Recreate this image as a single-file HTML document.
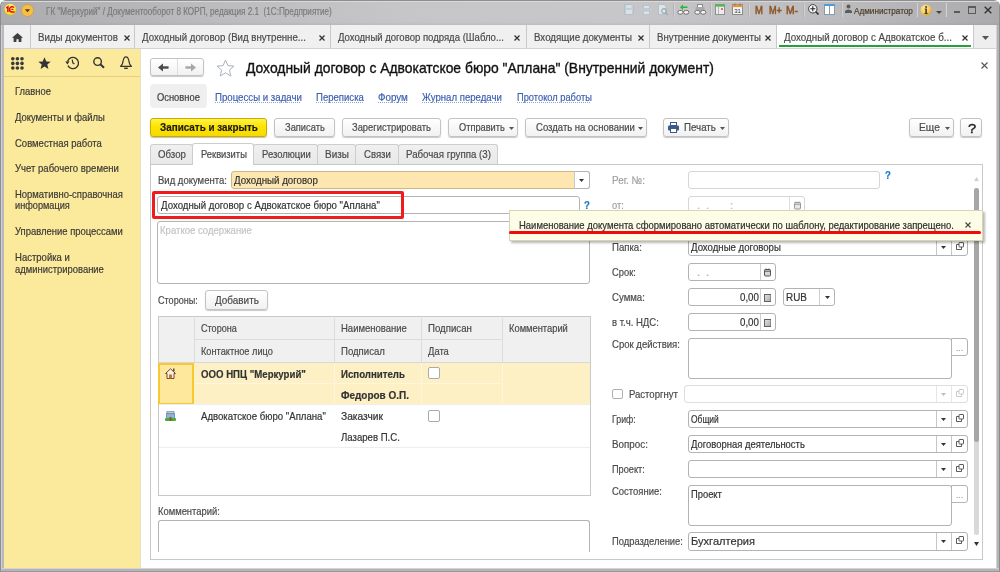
<!DOCTYPE html>
<html><head><meta charset="utf-8"><title>1C</title>
<style>
html,body{margin:0;padding:0;}
body{width:1000px;height:572px;overflow:hidden;position:relative;background:#c5c5c7;font-family:"Liberation Sans",sans-serif;}
div,svg{position:absolute;box-sizing:border-box;}
.t{white-space:pre;transform-origin:0 0;-webkit-text-stroke:0.2px currentColor;}
</style></head><body>
<div style="left:0px;top:0px;width:1000px;height:572px;background:#ffffff;"></div>
<div style="left:0px;top:0px;width:1000px;height:572px;background:#8e8e90;border-radius:6px 6px 0 0;"></div>
<div style="left:1px;top:1px;width:998px;height:570px;background:#c6c6c8;border-radius:5px 5px 0 0;"></div>
<div style="left:1px;top:1px;width:998px;height:24px;border-radius:5px 5px 0 0;background:linear-gradient(90deg,#acacae 0%,#bbbbbd 20%,#c6c6c8 40%,#c7c7c9 62%,#bcbcbe 84%,#ababad 100%);"></div>
<div style="left:1px;top:22px;width:998px;height:3px;background:linear-gradient(rgba(0,0,0,0),rgba(0,0,0,0.05));"></div>
<div style="left:1px;top:25px;width:3px;height:543px;background:linear-gradient(90deg,#d0d0d2 0 1px,#b9babe 1px);"></div>
<div style="left:2px;top:568px;width:996px;height:4px;background:linear-gradient(#d4d4d6 0 1px,#b4b4b6 1px 3px,#9a9a9c 3px);"></div>
<div style="left:2px;top:1px;width:996px;height:1px;background:#d9d9db;"></div>
<div class="t" style="left:46px;top:7px;font-size:10px;line-height:10px;font-weight:400;color:#7a7a7a;transform:scaleX(0.8148);">ГК &quot;Меркурий&quot; / Документооборот 8 КОРП, редакция 2.1  (1С:Предприятие)</div>
<svg style="left:4px;top:3px" width="13" height="13" viewBox="0 0 13 13"><defs><radialGradient id="lg" cx="0.45" cy="0.35" r="0.7"><stop offset="0" stop-color="#fffbb0"/><stop offset="0.6" stop-color="#ffe640"/><stop offset="1" stop-color="#f0c000"/></radialGradient></defs><circle cx="6.3" cy="6.5" r="5.8" fill="url(#lg)"/><path d="M2.3 5.2 L3.9 3.9 L3.9 8.9" fill="none" stroke="#e01010" stroke-width="1.6"/><path d="M9.9 4.6 C9.3 3.9 8.7 3.8 8 3.8 C6.6 3.8 5.6 5 5.6 6.4 C5.6 7.9 6.6 8.9 8 8.9 L10.6 8.9" fill="none" stroke="#e01010" stroke-width="1.5"/><path d="M7.3 6.4 L9.4 6.4" stroke="#e01010" stroke-width="1.3"/></svg>
<svg style="left:21px;top:4px" width="13" height="13" viewBox="0 0 13 13"><circle cx="6.5" cy="6.5" r="6" fill="#f4c04a" stroke="#d9962a" stroke-width="0.7"/><path d="M3.8 5.3 L9.2 5.3 L6.5 8.3 Z" fill="#5a3a10"/></svg>
<div style="left:37px;top:2px;width:1px;height:15px;background:#b0b0b2;"></div>
<div style="left:4px;top:25px;width:992px;height:23px;background:#f0f0f0;"></div>
<div style="left:4px;top:48px;width:992px;height:1px;background:#d2d2d6;"></div>
<div style="left:776px;top:25px;width:197px;height:23px;background:#ffffff;"></div>
<div style="left:973px;top:25px;width:23px;height:23px;background:#eeeeee;"></div>
<div style="left:30px;top:25px;width:1px;height:23px;background:#c9c9c9;"></div>
<div style="left:134px;top:25px;width:1px;height:23px;background:#c9c9c9;"></div>
<div style="left:330px;top:25px;width:1px;height:23px;background:#c9c9c9;"></div>
<div style="left:526px;top:25px;width:1px;height:23px;background:#c9c9c9;"></div>
<div style="left:649px;top:25px;width:1px;height:23px;background:#c9c9c9;"></div>
<div style="left:776px;top:25px;width:1px;height:23px;background:#c9c9c9;"></div>
<div style="left:973px;top:25px;width:1px;height:23px;background:#c9c9c9;"></div>
<svg style="left:12px;top:33px" width="11" height="9" viewBox="0 0 11 9"><path d="M5.5 0 L11 4.8 L9.4 4.8 L9.4 9 L6.6 9 L6.6 6.2 L4.4 6.2 L4.4 9 L1.6 9 L1.6 4.8 L0 4.8 Z" fill="#404040"/></svg>
<div class="t" style="left:38px;top:32px;font-size:11px;line-height:11px;font-weight:400;color:#4a4a4a;transform:scaleX(0.8842);">Виды документов</div>
<svg style="left:124px;top:35px" width="6" height="6" viewBox="0 0 6 6"><path d="M0.5 0.5 L5.5 5.5 M5.5 0.5 L0.5 5.5" stroke="#333" stroke-width="1.3"/></svg>
<div class="t" style="left:142px;top:32px;font-size:11px;line-height:11px;font-weight:400;color:#4a4a4a;transform:scaleX(0.8782);">Доходный договор (Вид внутренне...</div>
<svg style="left:319px;top:35px" width="6" height="6" viewBox="0 0 6 6"><path d="M0.5 0.5 L5.5 5.5 M5.5 0.5 L0.5 5.5" stroke="#333" stroke-width="1.3"/></svg>
<div class="t" style="left:338px;top:32px;font-size:11px;line-height:11px;font-weight:400;color:#4a4a4a;transform:scaleX(0.8677);">Доходный договор подряда (Шабло...</div>
<svg style="left:514px;top:35px" width="6" height="6" viewBox="0 0 6 6"><path d="M0.5 0.5 L5.5 5.5 M5.5 0.5 L0.5 5.5" stroke="#333" stroke-width="1.3"/></svg>
<div class="t" style="left:534px;top:32px;font-size:11px;line-height:11px;font-weight:400;color:#4a4a4a;transform:scaleX(0.8837);">Входящие документы</div>
<svg style="left:638px;top:35px" width="6" height="6" viewBox="0 0 6 6"><path d="M0.5 0.5 L5.5 5.5 M5.5 0.5 L0.5 5.5" stroke="#333" stroke-width="1.3"/></svg>
<div class="t" style="left:657px;top:32px;font-size:11px;line-height:11px;font-weight:400;color:#4a4a4a;transform:scaleX(0.8714);">Внутренние документы</div>
<svg style="left:765px;top:35px" width="6" height="6" viewBox="0 0 6 6"><path d="M0.5 0.5 L5.5 5.5 M5.5 0.5 L0.5 5.5" stroke="#333" stroke-width="1.3"/></svg>
<div class="t" style="left:784px;top:32px;font-size:11px;line-height:11px;font-weight:400;color:#4a4a4a;transform:scaleX(0.8881);">Доходный договор с Адвокатское б...</div>
<svg style="left:962px;top:35px" width="6" height="6" viewBox="0 0 6 6"><path d="M0.5 0.5 L5.5 5.5 M5.5 0.5 L0.5 5.5" stroke="#333" stroke-width="1.3"/></svg>
<div style="left:779px;top:45px;width:192px;height:2px;background:#25a03c;"></div>
<svg style="left:982px;top:36px" width="7" height="4" viewBox="0 0 7 4"><path d="M0 0 L7 0 L3.5 4 Z" fill="#555"/></svg>
<div style="left:4px;top:49px;width:136px;height:519px;background:#fbea9c;"></div>
<div style="left:4px;top:76px;width:136px;height:1px;background:#e3cf7e;"></div>
<div style="left:140px;top:49px;width:1px;height:519px;background:#e6e0c4;"></div>
<div class="t" style="left:15px;top:86px;font-size:11px;line-height:11px;font-weight:400;color:#3a3a36;transform:scaleX(0.8530);">Главное</div>
<div class="t" style="left:15px;top:112px;font-size:11px;line-height:11px;font-weight:400;color:#3a3a36;transform:scaleX(0.8590);">Документы и файлы</div>
<div class="t" style="left:15px;top:138px;font-size:11px;line-height:11px;font-weight:400;color:#3a3a36;transform:scaleX(0.8630);">Совместная работа</div>
<div class="t" style="left:15px;top:163px;font-size:11px;line-height:11px;font-weight:400;color:#3a3a36;transform:scaleX(0.8674);">Учет рабочего времени</div>
<div class="t" style="left:15px;top:189px;font-size:11px;line-height:11px;font-weight:400;color:#3a3a36;transform:scaleX(0.8583);">Нормативно-справочная</div>
<div class="t" style="left:15px;top:200px;font-size:11px;line-height:11px;font-weight:400;color:#3a3a36;transform:scaleX(0.8360);">информация</div>
<div class="t" style="left:15px;top:226px;font-size:11px;line-height:11px;font-weight:400;color:#3a3a36;transform:scaleX(0.8592);">Управление процессами</div>
<div class="t" style="left:15px;top:252px;font-size:11px;line-height:11px;font-weight:400;color:#3a3a36;transform:scaleX(0.8659);">Настройка и</div>
<div class="t" style="left:15px;top:264px;font-size:11px;line-height:11px;font-weight:400;color:#3a3a36;transform:scaleX(0.8570);">администрирование</div>
<svg style="left:11px;top:57px" width="13" height="13" viewBox="0 0 13 13"><circle cx="1.8" cy="1.8" r="1.8" fill="#3a3a3a"/><circle cx="1.8" cy="6.3999999999999995" r="1.8" fill="#3a3a3a"/><circle cx="1.8" cy="11.0" r="1.8" fill="#3a3a3a"/><circle cx="6.3999999999999995" cy="1.8" r="1.8" fill="#3a3a3a"/><circle cx="6.3999999999999995" cy="6.3999999999999995" r="1.8" fill="#3a3a3a"/><circle cx="6.3999999999999995" cy="11.0" r="1.8" fill="#3a3a3a"/><circle cx="11.0" cy="1.8" r="1.8" fill="#3a3a3a"/><circle cx="11.0" cy="6.3999999999999995" r="1.8" fill="#3a3a3a"/><circle cx="11.0" cy="11.0" r="1.8" fill="#3a3a3a"/></svg>
<svg style="left:38px;top:57px" width="13" height="13" viewBox="0 0 13 13"><path d="M6.5 0.3 L8.3 4.4 L12.7 4.7 L9.3 7.6 L10.4 12 L6.5 9.6 L2.6 12 L3.7 7.6 L0.3 4.7 L4.7 4.4 Z" fill="#333"/></svg>
<svg style="left:65px;top:56px" width="14" height="14" viewBox="0 0 14 14"><path d="M2.6 5.2 A5.6 5.6 0 1 1 2.9 9.6" fill="none" stroke="#333" stroke-width="1.3"/><path d="M0.3 5.6 L4.6 5.2 L2.4 8.6 Z" fill="#333"/><path d="M7.2 3.6 L7.8 6.8 L9.4 8" fill="none" stroke="#333" stroke-width="1.2"/></svg>
<svg style="left:93px;top:57px" width="12" height="12" viewBox="0 0 12 12"><circle cx="4.6" cy="4.6" r="3.8" fill="none" stroke="#333" stroke-width="1.4"/><path d="M7.3 7.3 L11 10.8" stroke="#333" stroke-width="2"/></svg>
<svg style="left:120px;top:56px" width="12" height="14" viewBox="0 0 12 14"><path d="M6 0.8 C4.2 0.8 3.4 3 3 5.5 L2.3 8.2 L0.6 10.4 L11.4 10.4 L9.7 8.2 L9 5.5 C8.6 3 7.8 0.8 6 0.8 Z" fill="none" stroke="#333" stroke-width="1.2" stroke-linejoin="round"/><path d="M4.2 12.3 L7.8 12.3" stroke="#333" stroke-width="1.4"/></svg>
<div style="left:141px;top:49px;width:855px;height:519px;background:#ffffff;"></div>
<div style="left:150px;top:58px;width:54px;height:18px;background:linear-gradient(#ffffff,#f1f1f1);border:1px solid #c3c3c3;border-radius:3px;box-shadow:0 1px 1px rgba(0,0,0,0.22);"></div>
<div style="left:177px;top:59px;width:1px;height:16px;background:#dedede;"></div>
<svg style="left:158px;top:63px" width="11" height="9" viewBox="0 0 11 9"><path d="M0 4.5 L5 0.5 L5 8.5 Z" fill="#4a4a4a"/><rect x="4" y="3.3" width="6.6" height="2.4" fill="#4a4a4a"/></svg>
<svg style="left:185px;top:63px" width="11" height="9" viewBox="0 0 11 9"><path d="M11 4.5 L6 0.5 L6 8.5 Z" fill="#a6a6a6"/><rect x="0.4" y="3.3" width="6.6" height="2.4" fill="#a6a6a6"/></svg>
<svg style="left:216px;top:59px" width="19" height="18" viewBox="0 0 19 18"><path d="M9.5 1 L11.9 6.6 L18 7.1 L13.4 11.1 L14.8 17 L9.5 13.8 L4.2 17 L5.6 11.1 L1 7.1 L7.1 6.6 Z" fill="none" stroke="#aab2bc" stroke-width="1"/></svg>
<div class="t" style="left:246px;top:60px;font-size:15px;line-height:15px;font-weight:400;color:#111;transform:scaleX(0.9250);-webkit-text-stroke:0.35px #111;">Доходный договор с Адвокатское бюро &quot;Аплана&quot; (Внутренний документ)</div>
<svg style="left:981px;top:62px" width="7" height="7" viewBox="0 0 7 7"><path d="M0.5 0.5 L6.5 6.5 M6.5 0.5 L0.5 6.5" stroke="#555" stroke-width="1.1"/></svg>
<div style="left:150px;top:84px;width:57px;height:24px;background:#efefef;border-radius:4px;"></div>
<div class="t" style="left:157px;top:92px;font-size:11px;line-height:11px;font-weight:400;color:#404040;transform:scaleX(0.8501);">Основное</div>
<div class="t" style="left:215px;top:92px;font-size:11px;line-height:11px;font-weight:400;color:#3d5fb0;transform:scaleX(0.8781);">Процессы и задачи</div>
<div style="left:215px;top:102px;width:86px;height:1px;background:repeating-linear-gradient(90deg,#8fa6d8 0 1px,transparent 1px 2px);"></div>
<div class="t" style="left:316px;top:92px;font-size:11px;line-height:11px;font-weight:400;color:#3d5fb0;transform:scaleX(0.8696);">Переписка</div>
<div style="left:316px;top:102px;width:47px;height:1px;background:repeating-linear-gradient(90deg,#8fa6d8 0 1px,transparent 1px 2px);"></div>
<div class="t" style="left:378px;top:92px;font-size:11px;line-height:11px;font-weight:400;color:#3d5fb0;transform:scaleX(0.8945);">Форум</div>
<div style="left:378px;top:102px;width:29px;height:1px;background:repeating-linear-gradient(90deg,#8fa6d8 0 1px,transparent 1px 2px);"></div>
<div class="t" style="left:422px;top:92px;font-size:11px;line-height:11px;font-weight:400;color:#3d5fb0;transform:scaleX(0.8735);">Журнал передачи</div>
<div style="left:422px;top:102px;width:79px;height:1px;background:repeating-linear-gradient(90deg,#8fa6d8 0 1px,transparent 1px 2px);"></div>
<div class="t" style="left:517px;top:92px;font-size:11px;line-height:11px;font-weight:400;color:#3d5fb0;transform:scaleX(0.8450);">Протокол работы</div>
<div style="left:517px;top:102px;width:74px;height:1px;background:repeating-linear-gradient(90deg,#8fa6d8 0 1px,transparent 1px 2px);"></div>
<div style="left:150px;top:118px;width:117px;height:19px;background:linear-gradient(#fff24a,#fde400 45%,#f6da00);border:1px solid #c9ab00;border-radius:3px;box-shadow:0 1px 1px rgba(0,0,0,0.25);"></div>
<div class="t" style="left:160px;top:122px;font-size:11px;line-height:11px;font-weight:700;color:#1a1a1a;transform:scaleX(0.8979);">Записать и закрыть</div>
<div style="left:274px;top:118px;width:61px;height:19px;background:linear-gradient(#ffffff,#f1f1f1);border:1px solid #c3c3c3;border-radius:3px;box-shadow:0 1px 1px rgba(0,0,0,0.22);"></div>
<div class="t" style="left:285px;top:122px;font-size:11px;line-height:11px;font-weight:400;color:#4a4a4a;transform:scaleX(0.8475);">Записать</div>
<div style="left:342px;top:118px;width:99px;height:19px;background:linear-gradient(#ffffff,#f1f1f1);border:1px solid #c3c3c3;border-radius:3px;box-shadow:0 1px 1px rgba(0,0,0,0.22);"></div>
<div class="t" style="left:352px;top:122px;font-size:11px;line-height:11px;font-weight:400;color:#4a4a4a;transform:scaleX(0.8519);">Зарегистрировать</div>
<div style="left:448px;top:118px;width:70px;height:19px;background:linear-gradient(#ffffff,#f1f1f1);border:1px solid #c3c3c3;border-radius:3px;box-shadow:0 1px 1px rgba(0,0,0,0.22);"></div>
<div class="t" style="left:459px;top:122px;font-size:11px;line-height:11px;font-weight:400;color:#4a4a4a;transform:scaleX(0.8404);">Отправить</div>
<svg style="left:509px;top:127px" width="5" height="3" viewBox="0 0 5 3"><path d="M0 0 L5 0 L2.5 3 Z" fill="#555"/></svg>
<div style="left:525px;top:118px;width:122px;height:19px;background:linear-gradient(#ffffff,#f1f1f1);border:1px solid #c3c3c3;border-radius:3px;box-shadow:0 1px 1px rgba(0,0,0,0.22);"></div>
<div class="t" style="left:536px;top:122px;font-size:11px;line-height:11px;font-weight:400;color:#4a4a4a;transform:scaleX(0.8663);">Создать на основании</div>
<svg style="left:638px;top:127px" width="5" height="3" viewBox="0 0 5 3"><path d="M0 0 L5 0 L2.5 3 Z" fill="#555"/></svg>
<div style="left:663px;top:118px;width:66px;height:19px;background:linear-gradient(#ffffff,#f1f1f1);border:1px solid #c3c3c3;border-radius:3px;box-shadow:0 1px 1px rgba(0,0,0,0.22);"></div>
<div class="t" style="left:684px;top:122px;font-size:11px;line-height:11px;font-weight:400;color:#4a4a4a;transform:scaleX(0.8845);">Печать</div>
<svg style="left:720px;top:127px" width="5" height="3" viewBox="0 0 5 3"><path d="M0 0 L5 0 L2.5 3 Z" fill="#555"/></svg>
<div style="left:909px;top:118px;width:45px;height:19px;background:linear-gradient(#ffffff,#f1f1f1);border:1px solid #c3c3c3;border-radius:3px;box-shadow:0 1px 1px rgba(0,0,0,0.22);"></div>
<div class="t" style="left:919px;top:122px;font-size:11px;line-height:11px;font-weight:400;color:#4a4a4a;transform:scaleX(0.9350);">Еще</div>
<svg style="left:945px;top:127px" width="5" height="3" viewBox="0 0 5 3"><path d="M0 0 L5 0 L2.5 3 Z" fill="#555"/></svg>
<div style="left:960px;top:118px;width:22px;height:19px;background:linear-gradient(#ffffff,#f1f1f1);border:1px solid #c3c3c3;border-radius:3px;box-shadow:0 1px 1px rgba(0,0,0,0.22);"></div>
<div class="t" style="left:968px;top:122px;font-size:13px;line-height:13px;font-weight:400;color:#222;transform:scaleX(1.1228);-webkit-text-stroke:0.4px #222;">?</div>
<svg style="left:668px;top:122px" width="11" height="11" viewBox="0 0 11 11"><rect x="2.5" y="0.5" width="6" height="3" fill="#fff" stroke="#3b5a8a"/><rect x="0" y="3.5" width="11" height="5" rx="1" fill="#3b5a8a"/><rect x="2.5" y="6.5" width="6" height="4" fill="#fff" stroke="#3b5a8a"/></svg>
<div style="left:150px;top:164px;width:833px;height:396px;border:1px solid #c9c9c9;background:#fff;"></div>
<div style="left:150px;top:144px;width:43px;height:20px;background:linear-gradient(#f0f0f0,#e8e8e8);border:1px solid #cdcdcd;border-bottom:none;border-radius:3px 3px 0 0;"></div>
<div class="t" style="left:158px;top:149px;font-size:11px;line-height:11px;font-weight:400;color:#4a4a4a;transform:scaleX(0.8772);">Обзор</div>
<div style="left:253px;top:144px;width:65px;height:20px;background:linear-gradient(#f0f0f0,#e8e8e8);border:1px solid #cdcdcd;border-bottom:none;border-radius:3px 3px 0 0;"></div>
<div class="t" style="left:262px;top:149px;font-size:11px;line-height:11px;font-weight:400;color:#4a4a4a;transform:scaleX(0.8603);">Резолюции</div>
<div style="left:317px;top:144px;width:39px;height:20px;background:linear-gradient(#f0f0f0,#e8e8e8);border:1px solid #cdcdcd;border-bottom:none;border-radius:3px 3px 0 0;"></div>
<div class="t" style="left:325px;top:149px;font-size:11px;line-height:11px;font-weight:400;color:#4a4a4a;transform:scaleX(0.9042);">Визы</div>
<div style="left:355px;top:144px;width:44px;height:20px;background:linear-gradient(#f0f0f0,#e8e8e8);border:1px solid #cdcdcd;border-bottom:none;border-radius:3px 3px 0 0;"></div>
<div class="t" style="left:364px;top:149px;font-size:11px;line-height:11px;font-weight:400;color:#4a4a4a;transform:scaleX(0.8721);">Связи</div>
<div style="left:398px;top:144px;width:100px;height:20px;background:linear-gradient(#f0f0f0,#e8e8e8);border:1px solid #cdcdcd;border-bottom:none;border-radius:3px 3px 0 0;"></div>
<div class="t" style="left:406px;top:149px;font-size:11px;line-height:11px;font-weight:400;color:#4a4a4a;transform:scaleX(0.8826);">Рабочая группа (3)</div>
<div style="left:192px;top:143px;width:62px;height:22px;background:#fff;border:1px solid #cdcdcd;border-bottom:none;border-radius:3px 3px 0 0;"></div>
<div class="t" style="left:201px;top:149px;font-size:11px;line-height:11px;font-weight:400;color:#4a4a4a;transform:scaleX(0.8506);">Реквизиты</div>
<div class="t" style="left:158px;top:175px;font-size:11px;line-height:11px;font-weight:400;color:#4a4a4a;transform:scaleX(0.8645);">Вид документа:</div>
<div style="left:231px;top:171px;width:359px;height:18px;border:1px solid #c9b98a;border-radius:3px;background:#fde6b0;"></div>
<div style="left:574px;top:171px;width:16px;height:18px;border:1px solid #b3b3b3;border-left:1px solid #c8c8c8;border-radius:0 3px 3px 0;background:#fff;"></div>
<svg style="left:579px;top:179px" width="5" height="3" viewBox="0 0 5 3"><path d="M0 0 L5 0 L2.5 3 Z" fill="#333"/></svg>
<div class="t" style="left:234px;top:175px;font-size:11px;line-height:11px;font-weight:400;color:#333;transform:scaleX(0.8847);">Доходный договор</div>
<div style="left:157px;top:196px;width:423px;height:18px;border:1px solid #b3b3b3;border-radius:3px;background:#fff;"></div>
<div class="t" style="left:161px;top:200px;font-size:11px;line-height:11px;font-weight:400;color:#333;transform:scaleX(0.8781);">Доходный договор с Адвокатское бюро &quot;Аплана&quot;</div>
<div class="t" style="left:584px;top:200px;font-size:11px;line-height:11px;font-weight:700;color:#1a78c8;transform:scaleX(0.8719);">?</div>
<div style="left:152px;top:191px;width:252px;height:28px;border:3px solid #ee1c1c;border-radius:2px;"></div>
<div style="left:157px;top:221px;width:433px;height:63px;border:1px solid #b3b3b3;border-radius:3px;background:#fff;"></div>
<div class="t" style="left:160px;top:225px;font-size:11px;line-height:11px;font-weight:400;color:#c4c4c4;transform:scaleX(0.8696);">Краткое содержание</div>
<div class="t" style="left:158px;top:295px;font-size:11px;line-height:11px;font-weight:400;color:#4a4a4a;transform:scaleX(0.8254);">Стороны:</div>
<div style="left:205px;top:290px;width:63px;height:20px;background:linear-gradient(#ffffff,#f1f1f1);border:1px solid #c3c3c3;border-radius:3px;box-shadow:0 1px 1px rgba(0,0,0,0.22);"></div>
<div class="t" style="left:215px;top:295px;font-size:11px;line-height:11px;font-weight:400;color:#4a4a4a;transform:scaleX(0.9029);">Добавить</div>
<div style="left:158px;top:316px;width:433px;height:180px;border:1px solid #c9c9c9;background:#fff;"></div>
<div style="left:159px;top:317px;width:431px;height:46px;background:#f0f0f0;"></div>
<div style="left:194px;top:318px;width:1px;height:45px;background:#dcdcdc;"></div>
<div style="left:195px;top:339px;width:308px;height:1px;background:#dcdcdc;"></div>
<div style="left:334px;top:318px;width:1px;height:87px;background:#dcdcdc;"></div>
<div style="left:421px;top:318px;width:1px;height:87px;background:#dcdcdc;"></div>
<div style="left:502px;top:318px;width:1px;height:45px;background:#dcdcdc;"></div>
<div style="left:159px;top:362px;width:431px;height:1px;background:#d8d8d8;"></div>
<div style="left:159px;top:363px;width:431px;height:41px;background:#fdf0c4;"></div>
<div style="left:195px;top:383px;width:308px;height:1px;background:#fdf5dc;"></div>
<div style="left:334px;top:363px;width:1px;height:41px;background:#fdf5dc;"></div>
<div style="left:421px;top:363px;width:1px;height:41px;background:#fdf5dc;"></div>
<div style="left:502px;top:363px;width:1px;height:41px;background:#fdf5dc;"></div>
<div style="left:158px;top:363px;width:36px;height:42px;border:2px solid #f6c832;background:#fde89c;"></div>
<div style="left:159px;top:404px;width:431px;height:1px;background:#eeeeee;"></div>
<div style="left:159px;top:447px;width:431px;height:1px;background:#eeeeee;"></div>
<div class="t" style="left:201px;top:323px;font-size:11px;line-height:11px;font-weight:400;color:#4a4a4a;transform:scaleX(0.8254);">Сторона</div>
<div class="t" style="left:201px;top:346px;font-size:11px;line-height:11px;font-weight:400;color:#4a4a4a;transform:scaleX(0.8368);">Контактное лицо</div>
<div class="t" style="left:341px;top:323px;font-size:11px;line-height:11px;font-weight:400;color:#4a4a4a;transform:scaleX(0.8636);">Наименование</div>
<div class="t" style="left:341px;top:346px;font-size:11px;line-height:11px;font-weight:400;color:#4a4a4a;transform:scaleX(0.8714);">Подписал</div>
<div class="t" style="left:428px;top:323px;font-size:11px;line-height:11px;font-weight:400;color:#4a4a4a;transform:scaleX(0.8776);">Подписан</div>
<div class="t" style="left:428px;top:346px;font-size:11px;line-height:11px;font-weight:400;color:#4a4a4a;transform:scaleX(0.8562);">Дата</div>
<div class="t" style="left:509px;top:323px;font-size:11px;line-height:11px;font-weight:400;color:#4a4a4a;transform:scaleX(0.8492);">Комментарий</div>
<div class="t" style="left:201px;top:369px;font-size:11px;line-height:11px;font-weight:700;color:#333;transform:scaleX(0.8752);">ООО НПЦ &quot;Меркурий&quot;</div>
<div class="t" style="left:341px;top:369px;font-size:11px;line-height:11px;font-weight:700;color:#333;transform:scaleX(0.8779);">Исполнитель</div>
<div class="t" style="left:341px;top:390px;font-size:11px;line-height:11px;font-weight:700;color:#333;transform:scaleX(0.9048);">Федоров О.П.</div>
<div class="t" style="left:201px;top:411px;font-size:11px;line-height:11px;font-weight:400;color:#333;transform:scaleX(0.8742);">Адвокатское бюро &quot;Аплана&quot;</div>
<div class="t" style="left:341px;top:411px;font-size:11px;line-height:11px;font-weight:400;color:#333;transform:scaleX(0.9279);">Заказчик</div>
<div class="t" style="left:341px;top:432px;font-size:11px;line-height:11px;font-weight:400;color:#333;transform:scaleX(0.8724);">Лазарев П.С.</div>
<div style="left:428px;top:367px;width:12px;height:12px;border:1px solid #aaa;border-radius:2px;background:#fff;"></div>
<div style="left:428px;top:410px;width:12px;height:12px;border:1px solid #aaa;border-radius:2px;background:#fff;"></div>
<svg style="left:165px;top:368px" width="11" height="11" viewBox="0 0 11 11"><path d="M5.5 0.8 L10.5 5.5 L9 5.5 L9 10.5 L2 10.5 L2 5.5 L0.5 5.5 Z" fill="#f8f0e4" stroke="#6a4a30" stroke-width="1" stroke-linejoin="round"/><rect x="4" y="6.5" width="3" height="4" fill="#d0702e"/><rect x="8" y="0.5" width="1.5" height="3" fill="#6a4a30"/></svg>
<svg style="left:165px;top:411px" width="11" height="10" viewBox="0 0 11 10"><rect x="2" y="0.5" width="7" height="2" fill="#c8ccd4" stroke="#8a94a4" stroke-width="0.8"/><rect x="1.5" y="2.5" width="8" height="5" fill="#8ab4dc" stroke="#6a8aac" stroke-width="0.8"/><rect x="0" y="7" width="11" height="3" rx="1" fill="#4aaa3a"/><rect x="4.5" y="6" width="2" height="4" fill="#8a5a2a"/></svg>
<div class="t" style="left:158px;top:506px;font-size:11px;line-height:11px;font-weight:400;color:#4a4a4a;transform:scaleX(0.8550);">Комментарий:</div>
<div style="left:158px;top:520px;width:432px;height:32px;border:1px solid #b3b3b3;border-bottom:none;border-radius:3px 3px 0 0;background:#fff;"></div>
<div class="t" style="left:612px;top:175px;font-size:11px;line-height:11px;font-weight:400;color:#a0a0a0;transform:scaleX(0.8986);">Рег. №:</div>
<div style="left:688px;top:171px;width:192px;height:18px;border:1px solid #d6d6d6;border-radius:3px;background:#fff;"></div>
<div class="t" style="left:885px;top:170px;font-size:11px;line-height:11px;font-weight:700;color:#1a78c8;transform:scaleX(0.8719);">?</div>
<div class="t" style="left:612px;top:200px;font-size:11px;line-height:11px;font-weight:400;color:#a0a0a0;transform:scaleX(0.8472);">от:</div>
<div style="left:688px;top:196px;width:117px;height:18px;border:1px solid #d6d6d6;border-radius:3px;background:#fff;"></div>
<div style="left:789px;top:197px;width:1px;height:16px;background:#dcdcdc;"></div>
<svg style="left:794px;top:201px" width="7" height="9" viewBox="0 0 7 9"><rect x="0.5" y="1.5" width="6" height="6.5" rx="0.8" fill="#e6e6e6" stroke="#999" stroke-width="1"/><path d="M0.5 3.2 L6.5 3.2" stroke="#999" stroke-width="1"/><path d="M2 0.5 L2 2 M5 0.5 L5 2" stroke="#999" stroke-width="1"/></svg>
<div class="t" style="left:697px;top:200px;font-size:11px;line-height:11px;font-weight:400;color:#b8b8b8;">.</div>
<div class="t" style="left:706px;top:200px;font-size:11px;line-height:11px;font-weight:400;color:#b8b8b8;">.</div>
<div class="t" style="left:730px;top:200px;font-size:11px;line-height:11px;font-weight:400;color:#b8b8b8;">:</div>
<div class="t" style="left:612px;top:242px;font-size:11px;line-height:11px;font-weight:400;color:#4a4a4a;transform:scaleX(0.8730);">Папка:</div>
<div style="left:688px;top:239px;width:280px;height:17px;border:1px solid #b3b3b3;border-radius:3px;background:#fff;"></div>
<div style="left:936px;top:240px;width:1px;height:15px;background:#c6c6c6;"></div>
<svg style="left:941px;top:246px" width="5" height="3" viewBox="0 0 5 3"><path d="M0 0 L5 0 L2.5 3 Z" fill="#333"/></svg>
<div style="left:951px;top:240px;width:1px;height:15px;background:#c6c6c6;"></div>
<svg style="left:956px;top:242px" width="8" height="8" viewBox="0 0 8 8"><rect x="3" y="0.5" width="4.5" height="4.5" rx="0.5" fill="none" stroke="#4a4a4a" stroke-width="0.9"/><path d="M3 2.5 L0.5 2.5 L0.5 7.5 L5.5 7.5 L5.5 5" fill="none" stroke="#4a4a4a" stroke-width="0.9"/></svg>
<div class="t" style="left:691px;top:242px;font-size:11px;line-height:11px;font-weight:400;color:#333;transform:scaleX(0.8752);">Доходные договоры</div>
<div class="t" style="left:612px;top:267px;font-size:11px;line-height:11px;font-weight:400;color:#4a4a4a;transform:scaleX(0.8499);">Срок:</div>
<div style="left:688px;top:263px;width:88px;height:18px;border:1px solid #b3b3b3;border-radius:3px;background:#fff;"></div>
<div style="left:760px;top:264px;width:1px;height:16px;background:#cfcfcf;"></div>
<svg style="left:764px;top:268px" width="7" height="9" viewBox="0 0 7 9"><rect x="0.5" y="1.5" width="6" height="6.5" rx="0.8" fill="#d6d6d6" stroke="#555" stroke-width="1"/><path d="M0.5 3.2 L6.5 3.2" stroke="#555" stroke-width="1"/><path d="M2 0.5 L2 2 M5 0.5 L5 2" stroke="#555" stroke-width="1"/></svg>
<div class="t" style="left:697px;top:267px;font-size:11px;line-height:11px;font-weight:400;color:#a8a8a8;">.</div>
<div class="t" style="left:706px;top:267px;font-size:11px;line-height:11px;font-weight:400;color:#a8a8a8;">.</div>
<div class="t" style="left:612px;top:292px;font-size:11px;line-height:11px;font-weight:400;color:#4a4a4a;transform:scaleX(0.8737);">Сумма:</div>
<div style="left:688px;top:288px;width:88px;height:18px;border:1px solid #b3b3b3;border-radius:3px;background:#fff;"></div>
<div style="left:760px;top:289px;width:1px;height:16px;background:#cfcfcf;"></div>
<svg style="left:764px;top:294px" width="7" height="8" viewBox="0 0 7 8"><defs><linearGradient id="cg" x1="0" y1="0" x2="1" y2="1"><stop offset="0" stop-color="#e4e4e4"/><stop offset="1" stop-color="#a8a8a8"/></linearGradient></defs><rect x="0.5" y="0.5" width="6.5" height="7" fill="url(#cg)" stroke="#606060" stroke-width="1"/></svg>
<div class="t" style="left:740px;top:292px;font-size:11px;line-height:11px;font-weight:400;color:#333;transform:scaleX(0.8814);">0,00</div>
<div style="left:783px;top:288px;width:52px;height:18px;border:1px solid #b3b3b3;border-radius:3px;background:#fff;"></div>
<div style="left:819px;top:289px;width:1px;height:16px;background:#cfcfcf;"></div>
<svg style="left:825px;top:296px" width="5" height="3" viewBox="0 0 5 3"><path d="M0 0 L5 0 L2.5 3 Z" fill="#333"/></svg>
<div class="t" style="left:786px;top:292px;font-size:11px;line-height:11px;font-weight:400;color:#333;transform:scaleX(0.8995);">RUB</div>
<div class="t" style="left:612px;top:317px;font-size:11px;line-height:11px;font-weight:400;color:#4a4a4a;transform:scaleX(0.8677);">в т.ч. НДС:</div>
<div style="left:688px;top:313px;width:88px;height:18px;border:1px solid #b3b3b3;border-radius:3px;background:#fff;"></div>
<div style="left:760px;top:314px;width:1px;height:16px;background:#cfcfcf;"></div>
<svg style="left:764px;top:319px" width="7" height="8" viewBox="0 0 7 8"><defs><linearGradient id="cg" x1="0" y1="0" x2="1" y2="1"><stop offset="0" stop-color="#e4e4e4"/><stop offset="1" stop-color="#a8a8a8"/></linearGradient></defs><rect x="0.5" y="0.5" width="6.5" height="7" fill="url(#cg)" stroke="#606060" stroke-width="1"/></svg>
<div class="t" style="left:740px;top:317px;font-size:11px;line-height:11px;font-weight:400;color:#333;transform:scaleX(0.8814);">0,00</div>
<div class="t" style="left:612px;top:339px;font-size:11px;line-height:11px;font-weight:400;color:#4a4a4a;transform:scaleX(0.8670);">Срок действия:</div>
<div style="left:688px;top:338px;width:264px;height:41px;border:1px solid #b3b3b3;border-radius:3px;background:#fff;"></div>
<div style="left:951px;top:338px;width:17px;height:18px;border:1px solid #b3b3b3;border-radius:0 3px 3px 0;background:#fff;"></div>
<div class="t" style="left:956px;top:345px;font-size:8px;line-height:8px;font-weight:400;color:#999;transform:scaleX(1.0579);">...</div>
<div style="left:612px;top:389px;width:11px;height:10px;border:1px solid #b0b0b0;border-radius:2px;background:#fff;"></div>
<div class="t" style="left:629px;top:389px;font-size:11px;line-height:11px;font-weight:400;color:#4a4a4a;transform:scaleX(0.8668);">Расторгнут</div>
<div style="left:684px;top:385px;width:284px;height:18px;border:1px solid #dedede;border-radius:3px;background:#fff;"></div>
<div style="left:936px;top:386px;width:1px;height:16px;background:#e6e6e6;"></div>
<svg style="left:941px;top:393px" width="5" height="3" viewBox="0 0 5 3"><path d="M0 0 L5 0 L2.5 3 Z" fill="#bdbdbd"/></svg>
<div style="left:951px;top:386px;width:1px;height:16px;background:#e6e6e6;"></div>
<svg style="left:956px;top:389px" width="8" height="8" viewBox="0 0 8 8"><rect x="3" y="0.5" width="4.5" height="4.5" rx="0.5" fill="none" stroke="#c4c4c4" stroke-width="0.9"/><path d="M3 2.5 L0.5 2.5 L0.5 7.5 L5.5 7.5 L5.5 5" fill="none" stroke="#c4c4c4" stroke-width="0.9"/></svg>
<div class="t" style="left:612px;top:414px;font-size:11px;line-height:11px;font-weight:400;color:#4a4a4a;transform:scaleX(0.8009);">Гриф:</div>
<div style="left:688px;top:410px;width:280px;height:18px;border:1px solid #b3b3b3;border-radius:3px;background:#fff;"></div>
<div style="left:936px;top:411px;width:1px;height:16px;background:#c6c6c6;"></div>
<svg style="left:941px;top:418px" width="5" height="3" viewBox="0 0 5 3"><path d="M0 0 L5 0 L2.5 3 Z" fill="#333"/></svg>
<div style="left:951px;top:411px;width:1px;height:16px;background:#c6c6c6;"></div>
<svg style="left:956px;top:414px" width="8" height="8" viewBox="0 0 8 8"><rect x="3" y="0.5" width="4.5" height="4.5" rx="0.5" fill="none" stroke="#4a4a4a" stroke-width="0.9"/><path d="M3 2.5 L0.5 2.5 L0.5 7.5 L5.5 7.5 L5.5 5" fill="none" stroke="#4a4a4a" stroke-width="0.9"/></svg>
<div class="t" style="left:691px;top:414px;font-size:11px;line-height:11px;font-weight:400;color:#333;transform:scaleX(0.7670);">Общий</div>
<div class="t" style="left:612px;top:439px;font-size:11px;line-height:11px;font-weight:400;color:#4a4a4a;transform:scaleX(0.8928);">Вопрос:</div>
<div style="left:688px;top:435px;width:280px;height:18px;border:1px solid #b3b3b3;border-radius:3px;background:#fff;"></div>
<div style="left:936px;top:436px;width:1px;height:16px;background:#c6c6c6;"></div>
<svg style="left:941px;top:443px" width="5" height="3" viewBox="0 0 5 3"><path d="M0 0 L5 0 L2.5 3 Z" fill="#333"/></svg>
<div style="left:951px;top:436px;width:1px;height:16px;background:#c6c6c6;"></div>
<svg style="left:956px;top:439px" width="8" height="8" viewBox="0 0 8 8"><rect x="3" y="0.5" width="4.5" height="4.5" rx="0.5" fill="none" stroke="#4a4a4a" stroke-width="0.9"/><path d="M3 2.5 L0.5 2.5 L0.5 7.5 L5.5 7.5 L5.5 5" fill="none" stroke="#4a4a4a" stroke-width="0.9"/></svg>
<div class="t" style="left:691px;top:439px;font-size:11px;line-height:11px;font-weight:400;color:#333;transform:scaleX(0.8592);">Договорная деятельность</div>
<div class="t" style="left:612px;top:464px;font-size:11px;line-height:11px;font-weight:400;color:#4a4a4a;transform:scaleX(0.8356);">Проект:</div>
<div style="left:688px;top:460px;width:280px;height:18px;border:1px solid #b3b3b3;border-radius:3px;background:#fff;"></div>
<div style="left:936px;top:461px;width:1px;height:16px;background:#c6c6c6;"></div>
<svg style="left:941px;top:468px" width="5" height="3" viewBox="0 0 5 3"><path d="M0 0 L5 0 L2.5 3 Z" fill="#333"/></svg>
<div style="left:951px;top:461px;width:1px;height:16px;background:#c6c6c6;"></div>
<svg style="left:956px;top:464px" width="8" height="8" viewBox="0 0 8 8"><rect x="3" y="0.5" width="4.5" height="4.5" rx="0.5" fill="none" stroke="#4a4a4a" stroke-width="0.9"/><path d="M3 2.5 L0.5 2.5 L0.5 7.5 L5.5 7.5 L5.5 5" fill="none" stroke="#4a4a4a" stroke-width="0.9"/></svg>
<div class="t" style="left:612px;top:486px;font-size:11px;line-height:11px;font-weight:400;color:#4a4a4a;transform:scaleX(0.8604);">Состояние:</div>
<div style="left:688px;top:485px;width:264px;height:41px;border:1px solid #b3b3b3;border-radius:3px;background:#fff;"></div>
<div style="left:951px;top:485px;width:17px;height:18px;border:1px solid #b3b3b3;border-radius:0 3px 3px 0;background:#fff;"></div>
<div class="t" style="left:956px;top:492px;font-size:8px;line-height:8px;font-weight:400;color:#999;transform:scaleX(1.0579);">...</div>
<div class="t" style="left:691px;top:489px;font-size:11px;line-height:11px;font-weight:400;color:#333;transform:scaleX(0.8514);">Проект</div>
<div class="t" style="left:612px;top:536px;font-size:11px;line-height:11px;font-weight:400;color:#4a4a4a;transform:scaleX(0.8514);">Подразделение:</div>
<div style="left:688px;top:532px;width:280px;height:19px;border:1px solid #b3b3b3;border-radius:3px;background:#fff;"></div>
<div style="left:936px;top:533px;width:1px;height:17px;background:#c6c6c6;"></div>
<svg style="left:941px;top:540px" width="5" height="3" viewBox="0 0 5 3"><path d="M0 0 L5 0 L2.5 3 Z" fill="#333"/></svg>
<div style="left:951px;top:533px;width:1px;height:17px;background:#c6c6c6;"></div>
<svg style="left:956px;top:536px" width="8" height="8" viewBox="0 0 8 8"><rect x="3" y="0.5" width="4.5" height="4.5" rx="0.5" fill="none" stroke="#4a4a4a" stroke-width="0.9"/><path d="M3 2.5 L0.5 2.5 L0.5 7.5 L5.5 7.5 L5.5 5" fill="none" stroke="#4a4a4a" stroke-width="0.9"/></svg>
<div class="t" style="left:691px;top:536px;font-size:11px;line-height:11px;font-weight:400;color:#333;transform:scaleX(1.0072);">Бухгалтерия</div>
<svg style="left:974px;top:177px" width="5" height="4" viewBox="0 0 5 4"><path d="M0 4 L5 4 L2.5 0 Z" fill="#cfcfcf"/></svg>
<div style="left:974px;top:188px;width:5px;height:347px;background:#d9d9d9;border-radius:3px;"></div>
<div style="left:974px;top:188px;width:5px;height:254px;background:#a6a6a6;border-radius:3px;"></div>
<svg style="left:974px;top:542px" width="5" height="4" viewBox="0 0 5 4"><path d="M0 0 L5 0 L2.5 4 Z" fill="#333"/></svg>
<div style="left:511px;top:212px;width:474px;height:31px;background:rgba(0,0,0,0.28);filter:blur(1px);"></div>
<div style="left:509px;top:210px;width:474px;height:31px;background:#fdfce6;border:1px solid #d9d4b4;"></div>
<div class="t" style="left:519px;top:220px;font-size:11px;line-height:11px;font-weight:400;color:#2e2e2e;transform:scaleX(0.8604);">Наименование документа сформировано автоматически по шаблону, редактирование запрещено.</div>
<svg style="left:965px;top:222px" width="6" height="6" viewBox="0 0 6 6"><path d="M0.5 0.5 L5.5 5.5 M5.5 0.5 L0.5 5.5" stroke="#444" stroke-width="1.1"/></svg>
<div style="left:509px;top:231px;width:472px;height:3px;background:#f00a0a;border-radius:2px;"></div>
<div style="left:673px;top:3px;width:1px;height:14px;background:#b4b4b6;"></div>
<div style="left:674px;top:3px;width:1px;height:14px;background:#d2d2d4;"></div>
<div style="left:710px;top:3px;width:1px;height:14px;background:#b4b4b6;"></div>
<div style="left:711px;top:3px;width:1px;height:14px;background:#d2d2d4;"></div>
<div style="left:748px;top:3px;width:1px;height:14px;background:#b4b4b6;"></div>
<div style="left:749px;top:3px;width:1px;height:14px;background:#d2d2d4;"></div>
<div style="left:803px;top:3px;width:1px;height:14px;background:#b4b4b6;"></div>
<div style="left:804px;top:3px;width:1px;height:14px;background:#d2d2d4;"></div>
<div style="left:841px;top:3px;width:1px;height:14px;background:#b4b4b6;"></div>
<div style="left:842px;top:3px;width:1px;height:14px;background:#d2d2d4;"></div>
<div style="left:916px;top:3px;width:1px;height:14px;background:#b4b4b6;"></div>
<div style="left:917px;top:3px;width:1px;height:14px;background:#d2d2d4;"></div>
<div style="left:945px;top:3px;width:1px;height:14px;background:#b4b4b6;"></div>
<div style="left:946px;top:3px;width:1px;height:14px;background:#d2d2d4;"></div>
<svg style="left:624px;top:4px" width="10" height="11" viewBox="0 0 10 11"><path d="M0.5 0.5 L8.5 0.5 L9.5 1.5 L9.5 10.5 L0.5 10.5 Z" fill="#c3ced6" stroke="#b3c0ca"/><rect x="2.5" y="1" width="5" height="3" fill="#d9e1e7"/><rect x="2" y="6" width="6" height="4" fill="#d9e1e7"/></svg>
<svg style="left:641px;top:5px" width="11" height="10" viewBox="0 0 11 10"><rect x="2.5" y="0.5" width="6" height="3" fill="#dde3e8" stroke="#b8c4cc"/><rect x="0.5" y="3" width="10" height="5" rx="1" fill="#bfcad2"/><rect x="2.5" y="6" width="6" height="3.5" fill="#dde3e8" stroke="#b8c4cc"/></svg>
<svg style="left:658px;top:4px" width="11" height="11" viewBox="0 0 11 11"><path d="M0.5 0.5 L6 0.5 L8 2.5 L8 10.5 L0.5 10.5 Z" fill="#dfe4e8" stroke="#b5c0c8"/><circle cx="6" cy="7" r="2.3" fill="none" stroke="#9aaab6" stroke-width="1.2"/><path d="M7.5 8.7 L9.7 10.7" stroke="#9aaab6" stroke-width="1.4"/></svg>
<svg style="left:677px;top:4px" width="13" height="11" viewBox="0 0 13 11"><path d="M10.5 2.5 L6 2.5 L6 0.5 L3 3.2 L6 6 L6 4 L10.5 4 Z" fill="#2fb52f"/><rect x="0.8" y="6.5" width="5.2" height="3.6" rx="1.8" fill="#f4f4f4" stroke="#707070" stroke-width="1"/><rect x="6.6" y="6.5" width="5.2" height="3.6" rx="1.8" fill="#f4f4f4" stroke="#707070" stroke-width="1"/></svg>
<svg style="left:694px;top:4px" width="13" height="11" viewBox="0 0 13 11"><rect x="3.5" y="0.5" width="5" height="3" fill="#fafafa" stroke="#8a8a8a"/><rect x="1.5" y="3" width="9" height="3.5" rx="0.8" fill="#a8a8a8"/><rect x="0.8" y="6.5" width="5.2" height="3.6" rx="1.8" fill="#f4f4f4" stroke="#707070" stroke-width="1"/><rect x="6.6" y="6.5" width="5.2" height="3.6" rx="1.8" fill="#f4f4f4" stroke="#707070" stroke-width="1"/></svg>
<svg style="left:715px;top:4px" width="10" height="11" viewBox="0 0 10 11"><rect x="0.5" y="0.5" width="9" height="10" fill="#ececec" stroke="#8f8f8f"/><rect x="0.5" y="0.5" width="9" height="2.2" fill="#4cc04c"/><path d="M3.5 2.7 L3.5 10.5" stroke="#a8a8a8" stroke-width="0.8"/><rect x="6" y="4" width="2" height="2" fill="#e07070"/></svg>
<svg style="left:732px;top:3px" width="11" height="12" viewBox="0 0 11 12"><rect x="0.5" y="1.5" width="10" height="10" fill="#f4f4f4" stroke="#8a8a8a"/><rect x="0.5" y="1.5" width="10" height="2.6" fill="#e8963c"/><path d="M3 0.5 L3 2.5 M8 0.5 L8 2.5" stroke="#777"/><text x="5.5" y="10.3" font-size="6" text-anchor="middle" fill="#333" font-family="Liberation Sans">31</text></svg>
<div class="t" style="left:755px;top:6px;font-size:10px;line-height:10px;font-weight:400;color:#8c5426;transform:scaleX(0.9532);-webkit-text-stroke:0.5px #8c5426;">M</div>
<div class="t" style="left:769px;top:6px;font-size:10px;line-height:10px;font-weight:400;color:#8c5426;transform:scaleX(0.9110);-webkit-text-stroke:0.5px #8c5426;">M+</div>
<div class="t" style="left:786px;top:6px;font-size:10px;line-height:10px;font-weight:400;color:#8c5426;transform:scaleX(1.0307);-webkit-text-stroke:0.5px #8c5426;">M-</div>
<svg style="left:808px;top:4px" width="11" height="11" viewBox="0 0 11 11"><circle cx="4.8" cy="4.8" r="4.2" fill="#f8f8f8" stroke="#3a3a3a" stroke-width="1"/><path d="M2.3 4.8 L7.3 4.8 M4.8 2.3 L4.8 7.3" stroke="#222" stroke-width="1.1"/><path d="M7.8 7.8 L10.5 10.5" stroke="#333" stroke-width="1.6"/></svg>
<svg style="left:824px;top:4px" width="11" height="11" viewBox="0 0 11 11"><rect x="0.5" y="0.5" width="10" height="10" fill="#fff" stroke="#8a9aaa"/><rect x="0.5" y="0.5" width="10" height="1.5" fill="#3a9ae8"/><path d="M5.5 2 L5.5 10.5" stroke="#8a9aaa"/></svg>
<svg style="left:845px;top:4px" width="7" height="9" viewBox="0 0 7 9"><circle cx="3.5" cy="2.5" r="2" fill="#5a5a5a"/><path d="M0 9 L0 7.5 C0 5.2 7 5.2 7 7.5 L7 9 Z" fill="#5a5a5a"/></svg>
<div class="t" style="left:854px;top:7px;font-size:9px;line-height:9px;font-weight:400;color:#4a3c28;transform:scaleX(0.9071);">Администратор</div>
<svg style="left:920px;top:4px" width="12" height="12" viewBox="0 0 12 12"><defs><radialGradient id="ig" cx="0.4" cy="0.35" r="0.7"><stop offset="0" stop-color="#fff0b0"/><stop offset="0.7" stop-color="#f6c24a"/><stop offset="1" stop-color="#d89a2a"/></radialGradient></defs><circle cx="6" cy="6" r="5.6" fill="url(#ig)"/><rect x="5.2" y="2.2" width="1.8" height="1.6" fill="#4a3a18"/><path d="M4.6 4.6 L6.9 4.6 L6.9 9 L7.6 9 L7.6 9.9 L4.6 9.9 L4.6 9 L5.3 9 L5.3 5.5 L4.6 5.5 Z" fill="#4a3a18"/></svg>
<svg style="left:936px;top:11px" width="6" height="3" viewBox="0 0 6 3"><path d="M0 0 L6 0 L3 3 Z" fill="#444"/></svg>
<div style="left:954px;top:11px;width:6px;height:2px;background:#5a5a5a;"></div>
<div style="left:968px;top:6px;width:8px;height:8px;border:1px solid #5a5a5a;border-top-width:2px;"></div>
<svg style="left:984px;top:6px" width="8" height="8" viewBox="0 0 8 8"><path d="M0.7 0.7 L7.3 7.3 M7.3 0.7 L0.7 7.3" stroke="#333" stroke-width="1.4"/></svg>
<div style="left:996px;top:25px;width:4px;height:543px;background:linear-gradient(90deg,#d4d4d6 0 1px,#b4b4b6 1px 3px,#8e8e90 3px);"></div>
</body></html>
